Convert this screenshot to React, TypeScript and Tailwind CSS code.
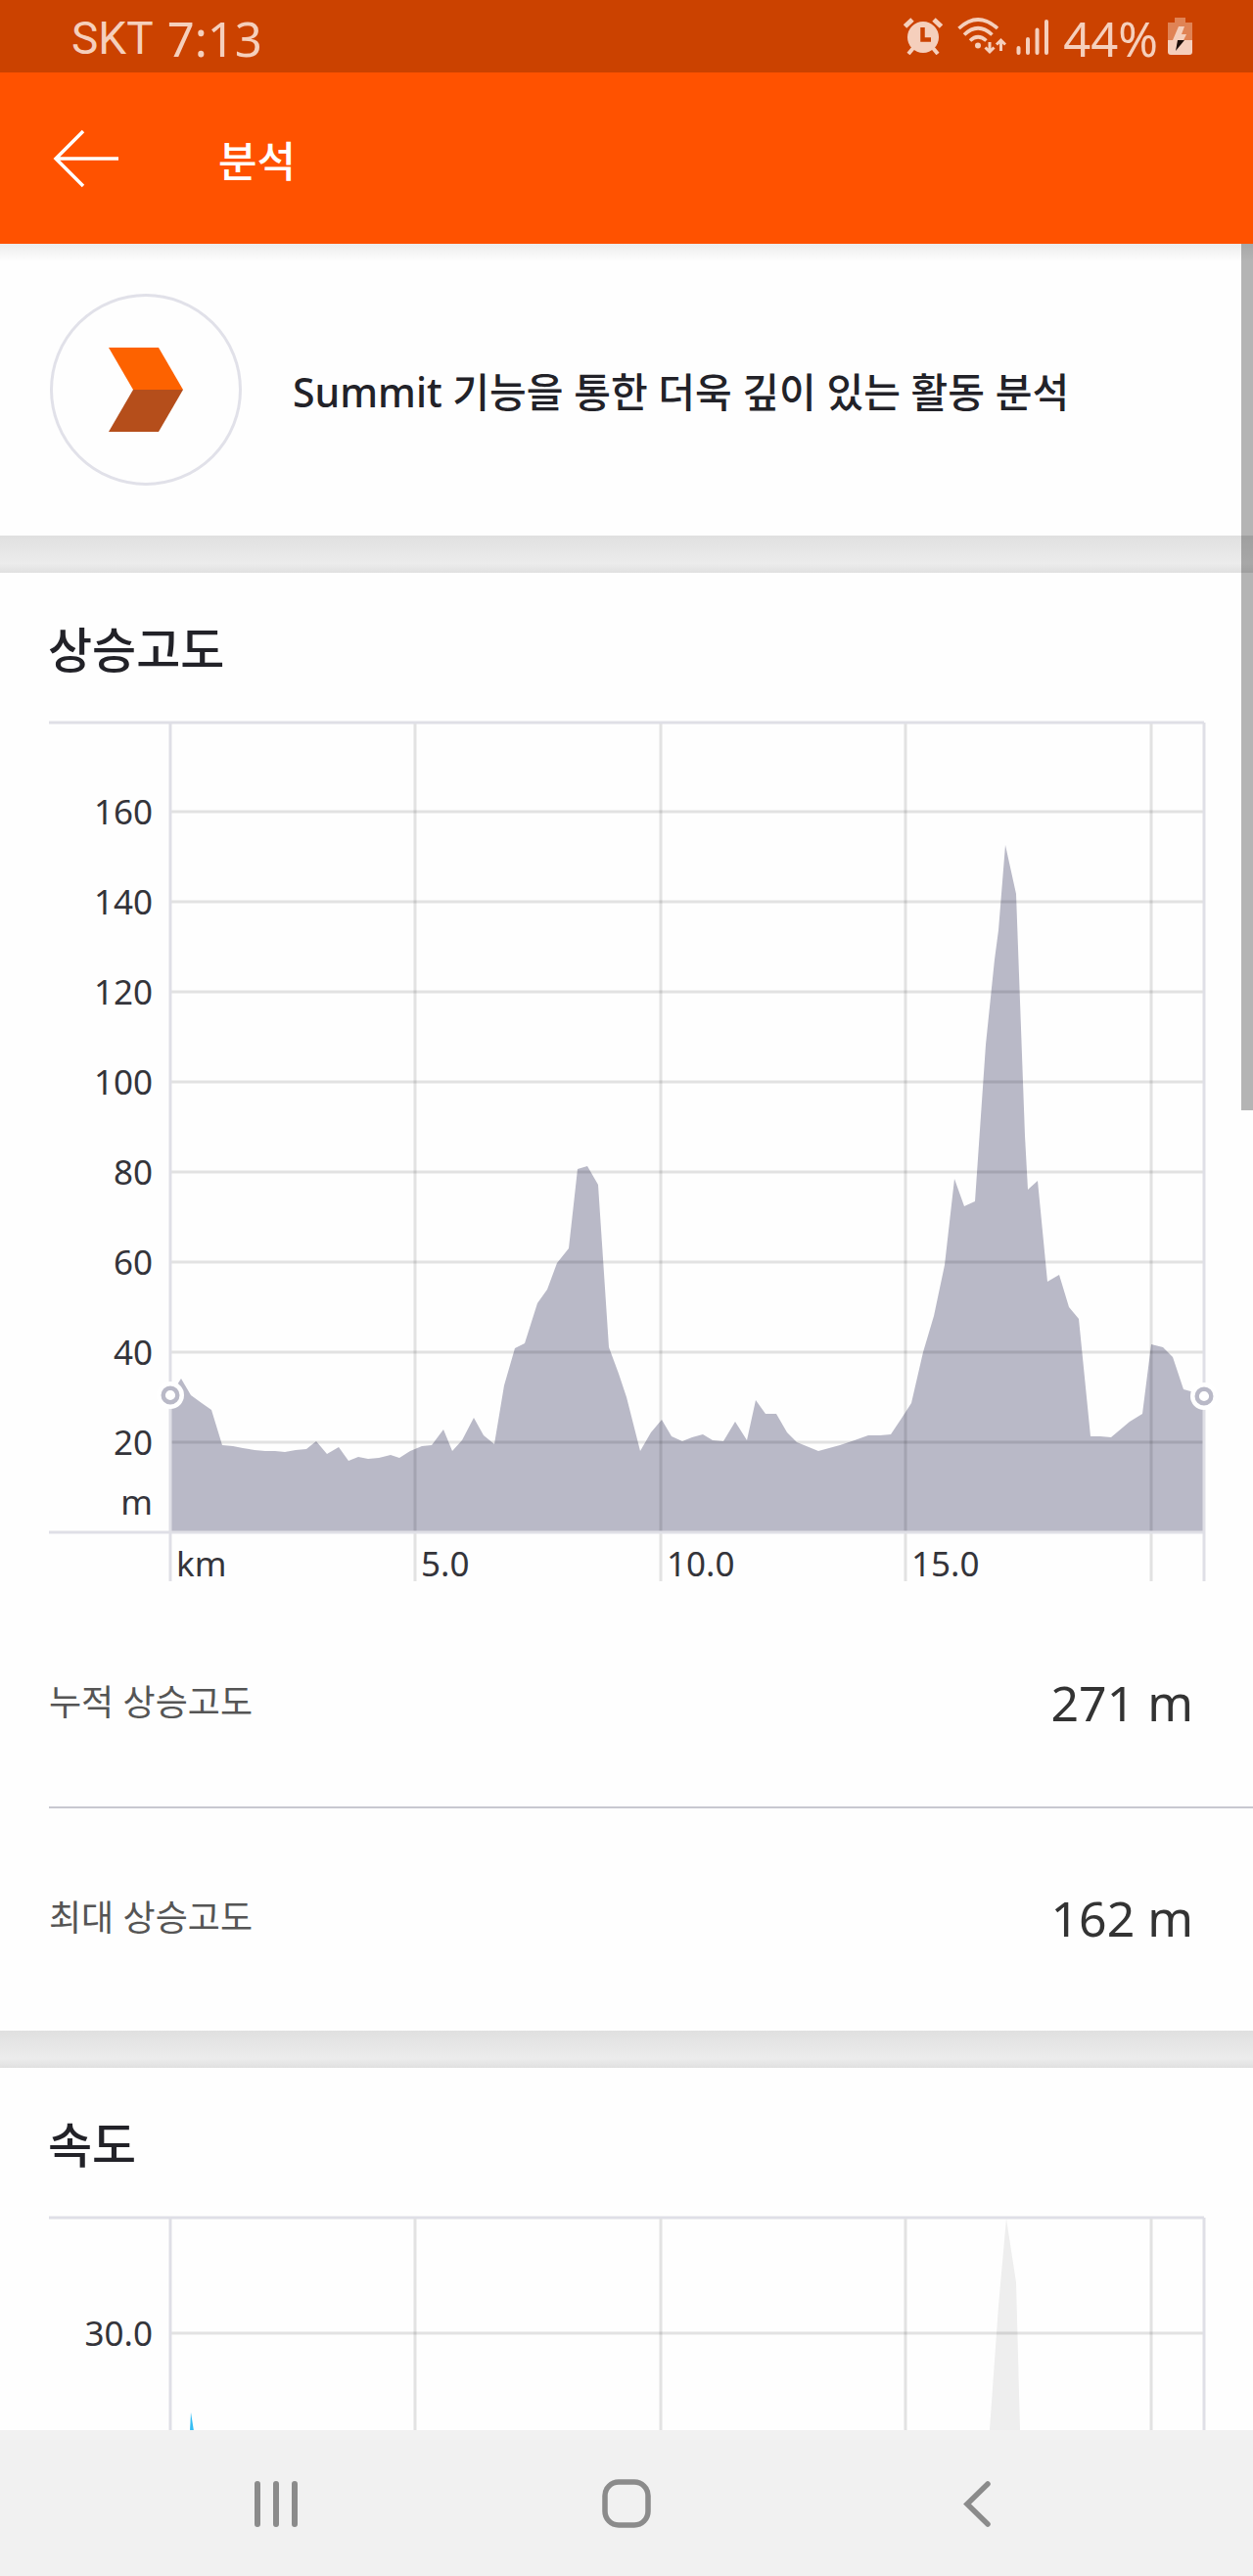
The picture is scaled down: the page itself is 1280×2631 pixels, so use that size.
type Point = [number, number];

type Tick = { at: number; label?: string };

// Plot geometry, in chart units. The origin of the plot is its lower left corner.
const LEFT = 124;
const PLOT_W = 1056;
const PLOT_H = 827;
const TOP = 2;

// [distance, height] pairs along the route
const ELEVATION: Point[] = [
  [0, 140], [11, 157], [21, 140], [32, 132], [42, 125], [53, 89], [64, 88], [74, 86], [86, 84], [97, 83],
  [107, 83], [117, 82], [128, 84], [139, 85], [149, 93], [160, 80], [172, 87], [182, 73], [192, 77], [202, 75],
  [213, 76], [225, 79], [234, 76], [245, 83], [257, 88], [267, 89], [279, 105], [288, 83], [298, 94], [310, 117],
  [320, 99], [331, 90], [341, 150], [352, 188], [362, 193], [375, 234], [385, 248], [395, 275], [407, 290],
  [416, 371], [426, 374], [437, 355], [448, 189], [458, 162], [466, 138], [480, 83], [491, 102], [502, 115],
  [512, 98], [523, 93], [533, 97], [544, 100], [554, 94], [565, 93], [577, 113], [589, 94], [598, 135], [608, 121],
  [619, 121], [630, 102], [640, 92], [662, 83], [684, 89], [699, 94], [713, 99], [725, 99], [736, 100], [748, 118],
  [757, 132], [769, 184], [780, 221], [791, 273], [801, 361], [811, 333], [822, 338], [827, 411], [833, 498],
  [842, 585], [846, 615], [853, 702], [864, 652], [873, 405], [876, 350], [886, 359], [896, 256], [908, 263],
  [918, 230], [928, 218], [940, 98], [950, 98], [961, 97], [980, 113], [993, 121], [1002, 192], [1014, 189],
  [1024, 179], [1035, 146], [1046, 143], [1056, 139],
];

const SPEED_BACKDROP: Point[] = [
  [833, 560], [837, 611], [846, 737], [854, 826], [864, 761], [868, 611], [870, 560],
];

const SPEED: Point[] = [[19, 590], [21, 628], [27, 590]];

const DISTANCE_TICKS: Tick[] = [
  { at: 250, label: "5.0" },
  { at: 501, label: "10.0" },
  { at: 751, label: "15.0" },
  { at: 1002 },
];

const ELEVATION_TICKS: Tick[] = [
  { at: 92, label: "20" },
  { at: 184, label: "40" },
  { at: 276, label: "60" },
  { at: 368, label: "80" },
  { at: 460, label: "100" },
  { at: 552, label: "120" },
  { at: 644, label: "140" },
  { at: 736, label: "160" },
];

const STATS = [
  { label: "누적 상승고도", value: "271 m" },
  { label: "최대 상승고도", value: "162 m" },
];

function toX(x: number): number {
  return LEFT + x;
}

function toY(height: number): number {
  return TOP + PLOT_H - height;
}

function areaPath(points: Point[], base: number): string {
  const line = points.map(([x, h]) => `L${toX(x)} ${toY(h)}`).join(" ");
  const first = points[0][0];
  const last = points[points.length - 1][0];
  return `M${toX(first)} ${toY(base)} ${line} L${toX(last)} ${toY(base)} Z`;
}

function Grid({ yTicks, depth }: { yTicks: Tick[]; depth: number }) {
  return (
    <>
      <g stroke="#000" strokeOpacity="0.11" strokeWidth="3">
        {yTicks.map((t) => (
          <line key={t.at} x1={LEFT} x2={LEFT + PLOT_W} y1={toY(t.at)} y2={toY(t.at)} />
        ))}
        {DISTANCE_TICKS.map((t) => (
          <line key={t.at} x1={toX(t.at)} x2={toX(t.at)} y1={TOP} y2={depth} />
        ))}
      </g>
      <g stroke="#dfdfe6" strokeWidth="3">
        <line x1="0" x2={LEFT + PLOT_W} y1={TOP} y2={TOP} />
        <line x1={LEFT} x2={LEFT} y1={TOP} y2={depth} />
        <line x1={LEFT + PLOT_W} x2={LEFT + PLOT_W} y1={TOP} y2={depth} />
      </g>
      <g fill="#34343a" fontSize="35" textAnchor="end">
        {yTicks.map((t) => (
          <text key={t.at} x="106" y={toY(t.at) + 13}>
            {t.label}
          </text>
        ))}
      </g>
    </>
  );
}

function Marker({ x, height }: { x: number; height: number }) {
  return (
    <g>
      <circle cx={toX(x)} cy={toY(height)} r="14" fill="#fff" />
      <circle cx={toX(x)} cy={toY(height)} r="7.3" fill="#fff" stroke="#b9b9c7" strokeWidth="4.4" />
    </g>
  );
}

function ElevationChart() {
  return (
    <svg viewBox="0 0 1180 880" className="block h-auto w-full overflow-visible" role="img" aria-label="상승고도">
      <path d={areaPath(ELEVATION, 0)} fill="#b9b9c7" />
      <Grid yTicks={ELEVATION_TICKS} depth={879} />
      <line x1="0" x2={LEFT + PLOT_W} y1={toY(0)} y2={toY(0)} stroke="#dfdfe6" strokeWidth="3" />
      <g fill="#34343a" fontSize="35">
        <text x="106" y="811" textAnchor="end">
          m
        </text>
        <text x="130" y="874">
          km
        </text>
        {DISTANCE_TICKS.filter((t) => t.label).map((t) => (
          <text key={t.at} x={toX(t.at) + 6} y="874">
            {t.label}
          </text>
        ))}
      </g>
      <Marker x={0} height={140} />
      <Marker x={PLOT_W} height={139} />
    </svg>
  );
}

function SpeedChart() {
  return (
    <svg viewBox="0 0 1180 260" className="block h-auto w-full overflow-visible" role="img" aria-label="속도">
      <path d={areaPath(SPEED_BACKDROP, 560)} fill="#eee" />
      <path d={areaPath(SPEED, 590)} fill="#35bdf3" />
      <Grid yTicks={[{ at: 709, label: "30.0" }]} depth={260} />
    </svg>
  );
}

function StatusBar() {
  return (
    <div className="flex h-[74px] shrink-0 items-center justify-between bg-[#cb4200] pr-[61px] pl-[73px] text-[#f5cfbc]">
      <div className="flex items-center gap-[14px] pt-1">
        <span className="font-[Roboto] text-[46px] leading-none">SKT</span>
        <span className="text-[49px] leading-none">7:13</span>
      </div>
      <div className="flex items-center">
        <svg width="40" height="38" viewBox="0 0 40 38" fill="currentColor" aria-hidden="true">
          <circle cx="20" cy="20" r="16" />
          <path d="M10 31 5 37M30 31l5 6" stroke="currentColor" strokeWidth="4" />
          <path d="M1.500 9 9 2M38.500 9 31 2" stroke="currentColor" strokeWidth="5" />
          <path d="M19.500 10v12.500H28" fill="none" stroke="#cb4200" strokeWidth="4.500" />
        </svg>
        <svg width="50" height="38" viewBox="0 0 50 38" className="ml-[15px]" aria-hidden="true">
          <g fill="none" stroke="currentColor" strokeWidth="3.600">
            <path d="M1.500 11Q21 -7 41 11" />
            <path d="M7 17.500Q21 4 35.500 17.500" />
            <path d="M13 23.500Q21 16 29.500 23.500" />
            <path d="M33 25v10M28.500 30.500l4.500 4.500 4.500-4.500" strokeWidth="3" />
            <path d="M44.500 34V23M40 27.500l4.500-4.500 4.500 4.500" strokeWidth="3" />
          </g>
          <circle cx="21" cy="28.500" r="3" fill="currentColor" />
        </svg>
        <svg width="34" height="38" viewBox="0 0 34 38" className="ml-2.5" aria-hidden="true">
          <path
            d="M2.500 31v5M12 22v14M21.500 12.500V36M31 4v32"
            stroke="currentColor"
            strokeWidth="4"
            strokeLinecap="round"
          />
        </svg>
        <span className="ml-3.5 pt-1 text-[49px] leading-none">44%</span>
        <svg width="26" height="38" viewBox="0 0 26 38" className="ml-2.5" aria-hidden="true">
          <path d="M7 0h11v5h7v18H0V5h7z" fill="#e08355" />
          <path d="M0 23h25v12q0 3-3 3H3q-3 0-3-3z" fill="currentColor" />
          <path d="M11 9h6l-3 8h5l-3 6H5z" fill="currentColor" />
          <path d="M10 23h7L8 34z" fill="#1d0f0a" />
        </svg>
      </div>
    </div>
  );
}

function Divider() {
  return <div className="h-[38px] bg-linear-to-b from-[#e0e0e0] via-[#ececec] via-75% to-[#e0e0e0]" />;
}

export default function App() {
  return (
    <div className="flex h-screen flex-col overflow-hidden bg-[#fefefe] font-['Noto_Sans','Noto_Sans_CJK_KR',sans-serif] text-[#222228]">
      <StatusBar />
      <header className="flex shrink-0 items-center bg-[#ff5200] py-[52px] pl-[54px] text-white">
        <button type="button" aria-label="뒤로">
          <svg width="68" height="60" viewBox="0 0 68 60" fill="none" stroke="currentColor" strokeWidth="3.500">
            <path d="M67 30H3M31 2 3 30l28 28" />
          </svg>
        </button>
        <h1 className="ml-[101px] pt-1.5 text-[43px] leading-[65px] font-medium">분석</h1>
      </header>

      <main className="relative min-h-0 flex-1 overflow-hidden">
        <section className="flex items-center gap-[52px] bg-linear-to-b from-[#ececec] to-[#fefefe] to-[18px] px-[51px] py-[51px]">
          <div className="flex size-[196px] shrink-0 items-center justify-center rounded-full border-3 border-[#e1e1e9] bg-[#fefefe]">
            <svg width="76" height="86" viewBox="0 0 76 86" aria-hidden="true">
              <path d="M0 0h51l25 43H25z" fill="#fd6200" />
              <path d="M25 43h51L51 86H0z" fill="#b54e1b" />
            </svg>
          </div>
          <h2 className="pt-1 text-[41px] leading-[64px] font-medium">Summit 기능을 통한 더욱 깊이 있는 활동 분석</h2>
        </section>

        <Divider />

        <section>
          <h2 className="px-[49px] pt-[42px] pb-[37px] text-[49px] leading-[72px] font-medium">상승고도</h2>
          <div className="px-[50px]">
            <ElevationChart />
          </div>
          <dl className="mt-[11px] mb-[9px] ml-[50px] divide-y-2 divide-[#c8c8d0]">
            {STATS.map((s) => (
              <div key={s.label} className="flex items-center justify-between pt-[82px] pr-[61px] pb-[76px]">
                <dt className="text-[36px] leading-[60px] text-[#555]">{s.label}</dt>
                <dd className="text-[50px] leading-[60px] text-[#333]">{s.value}</dd>
              </div>
            ))}
          </dl>
        </section>

        <Divider />

        <section>
          <h2 className="px-[49px] pt-[42px] pb-[37px] text-[49px] leading-[72px] font-medium">속도</h2>
          <div className="px-[50px]">
            <SpeedChart />
          </div>
        </section>

        <div className="absolute top-0 right-0 h-[885px] w-3 bg-black/29" />
      </main>

      <nav className="flex h-[149px] shrink-0 items-center justify-center gap-[298px] bg-[#f1f1f1] text-[#8b8b8b]">
        <button type="button" aria-label="최근 앱">
          <svg width="60" height="50" viewBox="0 0 60 50" stroke="currentColor" strokeWidth="6" strokeLinecap="round">
            <path d="M11 5v41M30 5v41M49 5v41" />
          </svg>
        </button>
        <button type="button" aria-label="홈">
          <svg width="60" height="50" viewBox="0 0 60 50" fill="none" stroke="currentColor" strokeWidth="5.500">
            <rect x="8" y="3" width="44" height="44" rx="14" />
          </svg>
        </button>
        <button type="button" aria-label="이전">
          <svg
            width="60"
            height="50"
            viewBox="0 0 60 50"
            fill="none"
            stroke="currentColor"
            strokeWidth="5.500"
            strokeLinecap="round"
          >
            <path d="M41 5 20 25.500 41 46" />
          </svg>
        </button>
      </nav>
    </div>
  );
}
